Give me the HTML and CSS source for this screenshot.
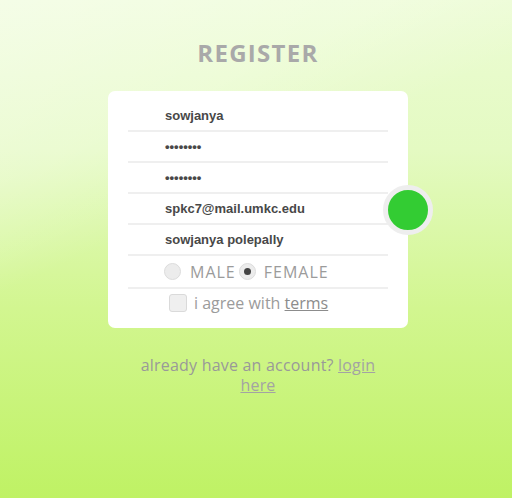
FILE: index.html
```html
<!DOCTYPE html>
<html>
<head>
<meta charset="utf-8">
<link rel="stylesheet" href="styles.css">
</head>
<body>
<main class="page">
  <h1 class="title">REGISTER</h1>
  <form class="card">
    <div class="row field">sowjanya</div>
    <div class="row field dots">••••••••</div>
    <div class="row field dots">••••••••</div>
    <div class="row field">spkc7@mail.umkc.edu</div>
    <div class="row field">sowjanya polepally</div>
    <div class="row gender">
      <span class="radio"></span><span class="opt caps">MALE</span>
      <span class="radio checked"></span><span class="opt caps">FEMALE</span>
    </div>
    <div class="row agree">
      <span class="checkbox"></span><span class="opt">i agree with <u class="link">terms</u></span>
    </div>
    <span class="submit"></span>
  </form>
  <p class="footer">already have an account? <u class="link light">login</u><br><u class="link light">here</u></p>
</main>
</body>
</html>
```
FILE: styles.css
```css
html, body {
  margin: 0;
  height: 100%;
}
body {
  background:
    linear-gradient(155deg, rgba(255,255,255,0.45) 0%, rgba(255,255,255,0.25) 25%, rgba(255,255,255,0) 40%),
    linear-gradient(to bottom, #ecfcd4 0%, #e4fac2 30%, #d2f690 62%, #bff264 100%);
  font-family: "Open Sans", "Liberation Sans", sans-serif;
}
.page {
  display: flex;
  flex-direction: column;
  align-items: center;
  padding: 36px 0 0 4px;
}
.title {
  margin: 0;
  font-size: 24px;
  font-weight: 700;
  letter-spacing: 1.3px;
  color: #a9a9a9;
  line-height: 33px;
}
.card {
  position: relative;
  margin: 22px 0 0;
  width: 260px;
  padding: 10px 20px 8px;
  background: #fff;
  border-radius: 7px;
}
.row {
  height: 29px;
  border-bottom: 2px solid #efefef;
  display: flex;
  align-items: center;
  padding-left: 37px;
}
.field {
  font-family: "Liberation Sans", Arial, sans-serif;
  font-weight: 700;
  font-size: 13px;
  color: #484848;
}
.dots {
  font-size: 13px;
}
.gender {
  height: 31px;
  padding-left: 36px;
}
.agree {
  border-bottom: none;
  height: 28px;
  padding-bottom: 3px;
  padding-left: 41px;
}
.opt {
  font-size: 16px;
  color: #9b9b9b;
}
.caps {
  letter-spacing: 1px;
}
.radio {
  box-sizing: border-box;
  width: 17px;
  height: 17px;
  border-radius: 50%;
  background: #ececec;
  border: 1px solid #dcdcdc;
  margin-right: 9px;
  display: flex;
  align-items: center;
  justify-content: center;
}
.gender .opt + .radio {
  margin-left: 3px;
  margin-right: 8px;
}
.radio.checked::after {
  content: "";
  width: 7px;
  height: 7px;
  border-radius: 50%;
  background: #444;
}
.checkbox {
  box-sizing: border-box;
  width: 18px;
  height: 18px;
  border-radius: 3px;
  background: #efefef;
  border: 1px solid #dadada;
  margin-right: 7px;
}
.link {
  color: #8c8c8c;
}
.link.light {
  color: #a3a3a3;
}
.submit {
  position: absolute;
  right: -25px;
  top: 94px;
  width: 40px;
  height: 40px;
  border-radius: 50%;
  background: #33cc33;
  border: 5px solid #eeeeee;
}
.footer {
  margin: 27px 0 0;
  width: 260px;
  text-align: center;
  font-size: 16px;
  letter-spacing: 0.2px;
  line-height: 20px;
  color: #999;
}
```
